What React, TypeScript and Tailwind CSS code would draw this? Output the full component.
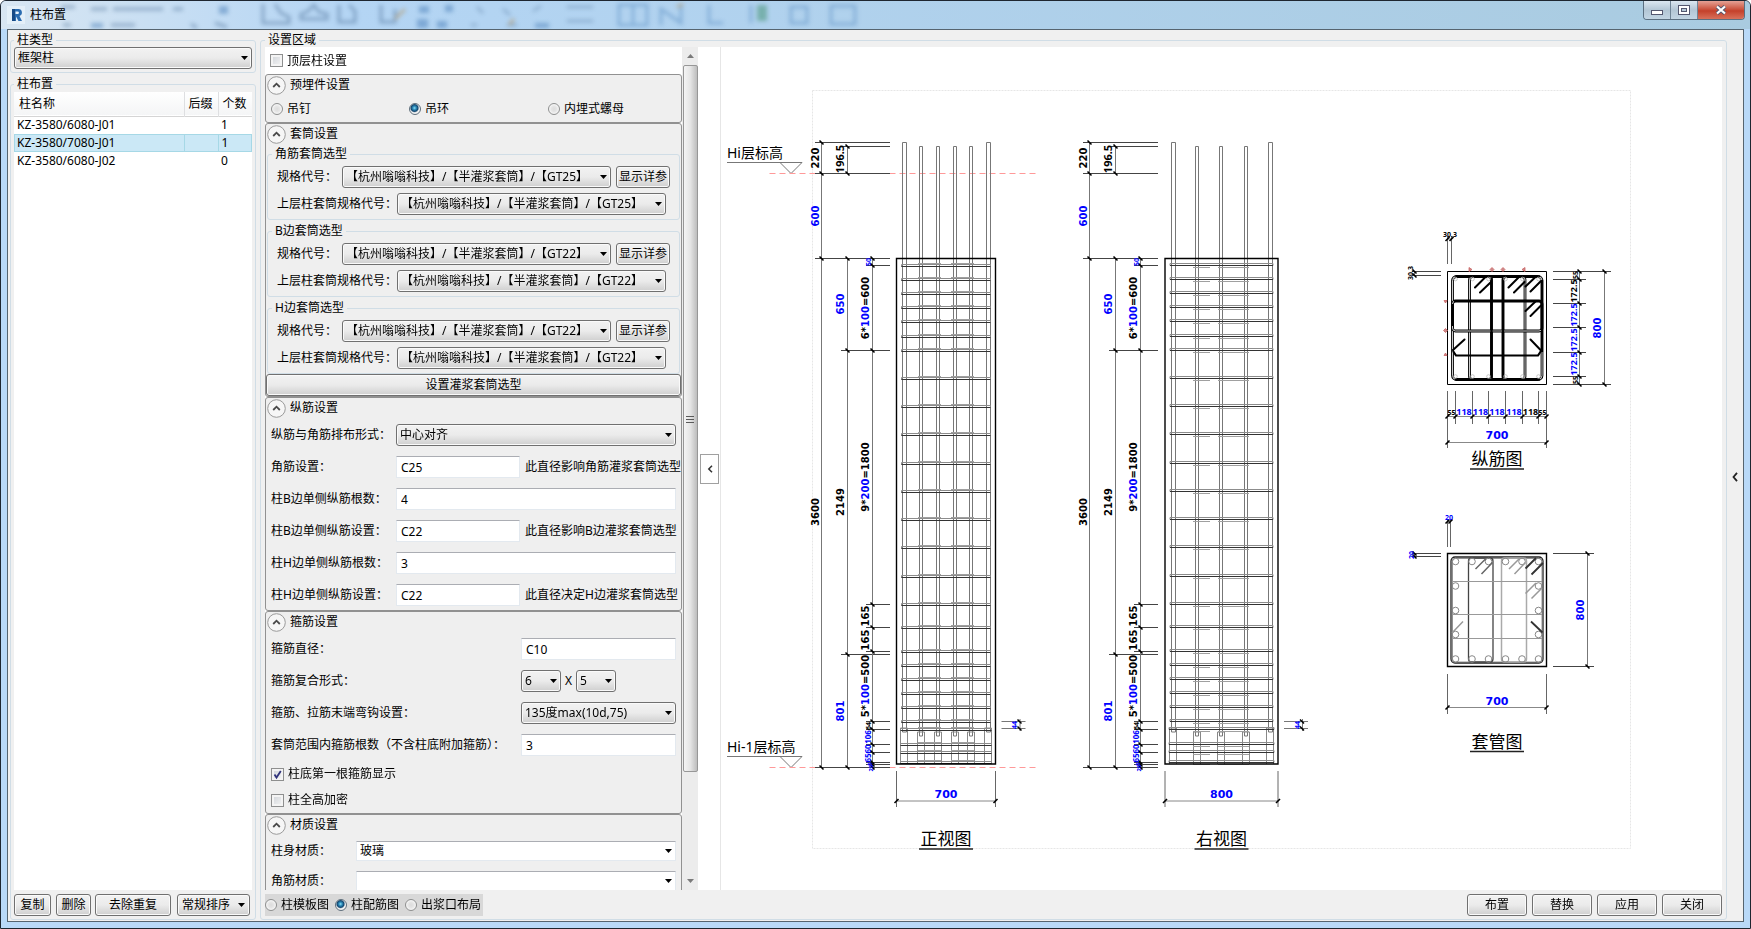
import { useState, type ReactNode } from "react";
import clsx from "clsx";

const FACE =
  "border border-[#707070] rounded-[3px] bg-linear-to-b from-[#f2f2f2] via-[#ebebeb] via-50% to-[#cfcfcf] shadow-[inset_0_0_0_1px_#fafafa]";

const COLUMNS = [
  { name: "KZ-3580/6080-J01", suffix: "", count: 1 },
  { name: "KZ-3580/7080-J01", suffix: "", count: 1 },
  { name: "KZ-3580/6080-J02", suffix: "", count: 0 },
];

function Arrow({ className }: { className?: string }) {
  return (
    <svg viewBox="0 0 7 4" className={clsx("pointer-events-none h-1 w-[7px]", className)}>
      <path d="M0 0h7L3.5 4z" fill="currentColor" />
    </svg>
  );
}

function Select({
  value,
  className,
  id,
  label,
  plain,
}: {
  value: string;
  className?: string;
  id?: string;
  label?: string;
  plain?: boolean;
}) {
  return (
    <div className={clsx("relative shrink-0", plain ? "h-5" : "h-[22px]", className)}>
      <select
        id={id}
        aria-label={label}
        defaultValue={value}
        className={clsx(
          "h-full w-full appearance-none pr-4 pl-[3px] outline-none",
          plain ? "border border-[#e3e9ef] border-t-[#abadb3] bg-white" : FACE,
        )}
      >
        <option>{value}</option>
      </select>
      <Arrow className="absolute top-1/2 right-1 -mt-0.5" />
    </div>
  );
}

function Button({ children, className }: { children: ReactNode; className?: string }) {
  return (
    <button
      type="button"
      className={clsx("flex h-[22px] shrink-0 items-center justify-center whitespace-nowrap", FACE, className)}
    >
      {children}
    </button>
  );
}

function TextBox({ id, value, className }: { id: string; value: string; className?: string }) {
  return (
    <input
      id={id}
      type="text"
      defaultValue={value}
      className={clsx(
        "h-[22px] shrink-0 border border-[#e3e9ef] border-t-[#abadb3] bg-white px-1 outline-none",
        className,
      )}
    />
  );
}

function Radio({ name, label, checked }: { name: string; label: string; checked?: boolean }) {
  return (
    <label className="flex items-center gap-1 whitespace-nowrap">
      <input
        type="radio"
        name={name}
        defaultChecked={checked}
        className="size-3 appearance-none rounded-full border border-[#8e8f8f] bg-[radial-gradient(circle,#dcdcdc_0,#e4e4e4_35%,#f6f6f6_70%)] checked:border-[#5f6f7c] checked:bg-[radial-gradient(circle_at_45%_40%,#8fe0f5_0,#2f8fbe_20%,#12466f_42%,#f2f2f2_58%)]"
      />
      {label}
    </label>
  );
}

function CheckBox({ label, checked }: { label: string; checked?: boolean }) {
  return (
    <label className="relative flex items-center gap-1 whitespace-nowrap">
      <input
        type="checkbox"
        defaultChecked={checked}
        className="peer size-[13px] appearance-none border border-[#8e8f8f] bg-linear-to-br from-[#cfd3d8] to-[#f6f6f6] shadow-[inset_0_0_0_2px_#f4f4f4]"
      />
      <svg viewBox="0 0 13 13" className="pointer-events-none absolute left-0 hidden size-[13px] peer-checked:block">
        <path d="M3.5 6.5 5.5 9.5 9.8 3" fill="none" stroke="#31347c" strokeWidth="1.8" />
      </svg>
      {label}
    </label>
  );
}

function Group({
  title,
  children,
  className,
  legend,
}: {
  title: string;
  children: ReactNode;
  className?: string;
  legend?: string;
}) {
  return (
    <fieldset className={clsx("min-w-0 rounded-[3px] border border-[#d0dde6]", className)}>
      <legend className={clsx("px-[3px] leading-[14px]", legend)}>{title}</legend>
      {children}
    </fieldset>
  );
}

function Section({ title, children }: { title: string; children: ReactNode }) {
  const [open, setOpen] = useState(true);

  return (
    <section className="rounded-[3px] border border-[#919191] bg-[#efefef]">
      <button type="button" onClick={() => setOpen(!open)} className="flex h-5 items-center gap-1 pl-px">
        <svg viewBox="0 0 19 19" className="size-[19px]" fill="none">
          <circle cx="9.5" cy="9.5" r="8.8" fill="#f6f6f6" stroke="#9a9a9a" />
          <path d="m6.2 11 3.3-3.3 3.3 3.3" stroke="#4a4a4a" strokeWidth="1.8" />
        </svg>
        {title}
      </button>
      {open && children}
    </section>
  );
}

function SleeveGroup({ title, id, model }: { title: string; id: string; model: string }) {
  const value = `【杭州嗡嗡科技】/【半灌浆套筒】/【${model}】`;

  return (
    <Group title={title} className="mx-px" legend="ml-1">
      <div className="flex flex-col gap-[5px] pt-[5px] pb-1 pl-[9px]">
        <div className="flex items-center">
          <label htmlFor={`${id}-spec`} className="w-[65px]">规格代号：</label>
          <Select id={`${id}-spec`} value={value} className="w-[269px]" />
          <Button className="ml-[5px] w-[54px]">显示详参</Button>
        </div>
        <div className="flex items-center">
          <label htmlFor={`${id}-upper`} className="w-[120px] whitespace-nowrap">上层柱套筒规格代号：</label>
          <Select id={`${id}-upper`} value={value} className="w-[269px]" />
        </div>
      </div>
    </Group>
  );
}

const BAR_FIELDS = [
  { id: "corner", label: "角筋设置：", value: "C25", hint: "此直径影响角筋灌浆套筒选型" },
  { id: "b-count", label: "柱B边单侧纵筋根数：", value: "4" },
  { id: "b-bar", label: "柱B边单侧纵筋设置：", value: "C22", hint: "此直径影响B边灌浆套筒选型" },
  { id: "h-count", label: "柱H边单侧纵筋根数：", value: "3" },
  { id: "h-bar", label: "柱H边单侧纵筋设置：", value: "C22", hint: "此直径决定H边灌浆套筒选型" },
];

function Settings() {
  return (
    <div className="w-[417px] overflow-y-auto bg-white [scrollbar-width:none]">
      <div className="flex h-[27px] items-center pl-[5px]">
        <CheckBox label="顶层柱设置" />
      </div>

      <Section title="预埋件设置">
        <div className="grid h-[27px] grid-cols-[138px_139px_auto] items-center pl-[5px]">
          <Radio name="embed" label="吊钉" />
          <Radio name="embed" label="吊环" checked />
          <Radio name="embed" label="内埋式螺母" />
        </div>
      </Section>

      <Section title="套筒设置">
        <div className="flex flex-col gap-1 pt-[3px]">
          <SleeveGroup title="角筋套筒选型" id="corner-sleeve" model="GT25" />
          <SleeveGroup title="B边套筒选型" id="b-sleeve" model="GT22" />
          <SleeveGroup title="H边套筒选型" id="h-sleeve" model="GT22" />
        </div>
        <Button className="w-full">设置灌浆套筒选型</Button>
      </Section>

      <Section title="纵筋设置">
        <div className="flex flex-col gap-2.5 pt-1.5 pb-1 pl-[5px]">
          <div className="flex items-center">
            <label htmlFor="align" className="w-[125px] whitespace-nowrap">纵筋与角筋排布形式：</label>
            <Select id="align" value="中心对齐" className="w-[280px]" />
          </div>
          {BAR_FIELDS.map((f) => (
            <div key={f.id} className="flex items-center">
              <label htmlFor={f.id} className="w-[125px] shrink-0 whitespace-nowrap">{f.label}</label>
              <TextBox id={f.id} value={f.value} className={f.hint ? "w-[124px]" : "w-[280px]"} />
              {f.hint && <span className="ml-[5px] whitespace-nowrap">{f.hint}</span>}
            </div>
          ))}
        </div>
      </Section>

      <Section title="箍筋设置">
        <div className="flex flex-col gap-2.5 pt-1.5 pl-[5px]">
          <div className="flex items-center">
            <label htmlFor="hoop" className="w-[250px]">箍筋直径：</label>
            <TextBox id="hoop" value="C10" className="w-[155px]" />
          </div>
          <div className="flex items-center">
            <label htmlFor="hoop-b" className="w-[250px]">箍筋复合形式：</label>
            <Select id="hoop-b" value="6" className="w-10" />
            <span className="w-[15px] text-center">X</span>
            <Select label="H边肢数" value="5" className="w-10" />
          </div>
          <div className="flex items-center">
            <label htmlFor="hook" className="w-[250px]">箍筋、拉筋末端弯钩设置：</label>
            <Select id="hook" value="135度max(10d,75)" className="w-[155px]" />
          </div>
          <div className="flex items-center">
            <label htmlFor="sleeve-hoops" className="w-[250px] whitespace-nowrap">
              套筒范围内箍筋根数（不含柱底附加箍筋）：
            </label>
            <TextBox id="sleeve-hoops" value="3" className="w-[155px]" />
          </div>
        </div>
        <div className="mt-[5px] grid auto-rows-[26px] items-center pl-[5px]">
          <CheckBox label="柱底第一根箍筋显示" checked />
          <CheckBox label="柱全高加密" />
        </div>
      </Section>

      <Section title="材质设置">
        <div className="flex flex-col gap-2.5 pt-1.5 pb-2 pl-[5px]">
          <div className="flex items-center">
            <label htmlFor="body-mat" className="w-[85px]">柱身材质：</label>
            <Select plain id="body-mat" value="玻璃" className="w-80" />
          </div>
          <div className="flex items-center">
            <label htmlFor="corner-mat" className="w-[85px]">角筋材质：</label>
            <Select plain id="corner-mat" value="" className="w-80" />
          </div>
        </div>
      </Section>
    </div>
  );
}

function ScrollBar() {
  return (
    <div className="flex w-4 flex-col items-center bg-[#ececec]">
      <div className="flex h-[18px] items-center">
        <Arrow className="rotate-180 text-[#7a7a7a]" />
      </div>
      <div className="flex w-[15px] flex-[707] items-center justify-center rounded-[2px] border border-[#979797] bg-linear-to-r from-[#f4f4f4] via-[#e4e4e4] to-[#bdbdbd]">
        <svg viewBox="0 0 8 8" className="size-2" stroke="#5a5a5a">
          <path d="M0 1.5h8M0 4.5h8M0 7.5h8" />
        </svg>
      </div>
      <div className="flex-[100]" />
      <div className="flex h-[18px] items-center">
        <Arrow className="text-[#7a7a7a]" />
      </div>
    </div>
  );
}

/* ---------- drawing ---------- */

const BLUE = "#0000ff";

function Num({ x, y, t, size = 10, blue, turn }: { x: number; y: number; t: string; size?: number; blue?: boolean; turn?: boolean }) {
  // in "6*100=600" only the spacing is editable, so it alone is blue
  const m = /^(\d+\*)(\d+)(=\d+)$/.exec(t);
  // tight dimensions take the narrower face
  const narrow = size < 10 || t.includes(".");
  return (
    <text
      transform={`translate(${x} ${y})${turn ? " rotate(-90)" : ""}`}
      textAnchor="middle"
      dy={size * 0.365}
      fontSize={size}
      fontWeight="bold"
      fill={blue ? BLUE : "#000"}
      className={narrow ? "font-['Noto_Sans',sans-serif]" : "font-['DejaVu_Sans',sans-serif]"}
    >
      {m ? (
        <>
          {m[1]}
          <tspan fill={BLUE}>{m[2]}</tspan>
          {m[3]}
        </>
      ) : (
        t
      )}
    </text>
  );
}

function VDim({ x, ys, from, to }: { x: number; ys: number[]; from: number; to: number }) {
  return (
    <g>
      <path d={`M${x} ${ys[0]}V${ys[ys.length - 1]}`} stroke="#777" />
      {ys.map((y) => (
        <g key={y}>
          <path d={`M${from} ${y}H${to}`} stroke="#444" />
          <path d={`M${x - 2} ${y - 2}l4 4`} stroke="#000" strokeWidth="1.6" />
        </g>
      ))}
    </g>
  );
}

function HDim({ y, xs, from, to }: { y: number; xs: number[]; from: number; to: number }) {
  return (
    <g>
      <path d={`M${xs[0]} ${y}H${xs[xs.length - 1]}`} stroke="#888" />
      {xs.map((x) => (
        <g key={x}>
          <path d={`M${x} ${from}V${to}`} stroke="#666" />
          <path d={`M${x - 2} ${y + 2}l4 -4`} stroke="#000" strokeWidth="1.6" />
        </g>
      ))}
    </g>
  );
}

function Caption({ x, y, t }: { x: number; y: number; t: string }) {
  return (
    <g>
      <text x={x} y={y} textAnchor="middle" fontSize="17">{t}</text>
      <path d={`M${x - 27} ${y + 4}h54`} stroke="#222" strokeWidth="1.5" />
    </g>
  );
}

function Level({ y, t }: { y: number; t: string }) {
  return (
    <g fill="none">
      <text x="727" y={y - 16} fontSize="14" fill="#000">{t}</text>
      <path d={`M727 ${y - 11}h75l-11 11l-11 -11`} stroke="#777" />
      <path d={`M769.5 ${y}H1039`} stroke="#f99" strokeDasharray="6 4" />
    </g>
  );
}

function SideDims() {
  return (
    <g>
      <VDim x={821.5} ys={[142.5, 173.5, 258.5, 767.5]} from={815} to={890} />
      <VDim x={847.5} ys={[146.5, 173.5]} from={841} to={890} />
      <VDim x={847.5} ys={[258.5, 350.5, 654.5, 767.5]} from={841} to={890} />
      <VDim x={872.5} ys={[258.5, 265.5, 350.5, 604.5, 627.5, 651.5, 721.5, 729.5, 744.5, 752.5, 762.5, 764.5, 767.5]} from={866} to={890} />
      <Num turn x={815} y={158} t="220" />
      <Num turn x={840} y={159} t="196.5" size={11} />
      <Num turn blue x={815} y={216} t="600" />
      <Num turn blue x={840} y={304} t="650" />
      <Num turn blue x={868} y={262} t="50" size={7} />
      <Num turn x={865} y={308} t="6*100=600" />
      <Num turn x={865} y={477} t="9*200=1800" />
      <Num turn x={815} y={512} t="3600" />
      <Num turn x={840} y={502} t="2149" />
      <Num turn x={865} y={616} t="165" />
      <Num turn x={865} y={640} t="165" />
      <Num turn x={865} y={686} t="5*100=500" />
      <Num turn blue x={840} y={711} t="801" />
      <Num turn x={868} y={726} t="64" size={7} />
      <Num turn blue x={868} y={737} t="106" size={8} />
      <Num turn blue x={868} y={749} t="60" size={8} />
      <Num turn blue x={868} y={758} t="65" size={8} />
      <Num turn blue x={870} y={764} t="5" size={6} />
      <Num turn blue x={871} y={768} t="20" size={6} />
    </g>
  );
}

// heights of the hoops from the top of the column to the sleeves
const HOOPS = [
  266, 280, 294, 308, 322, 337, 351, 379, 407, 435, 464, 492, 520, 548, 577, 605, 628, 652, 666, 680, 694, 708, 722,
];
const SLEEVE_HOOPS = [730, 745, 753, 763];

function Elevation({
  left,
  right,
  bars,
  links,
  linkShift,
  t,
  width,
}: {
  left: number;
  right: number;
  bars: number[];
  links: [number, number][];
  linkShift: number;
  t: string;
  width: string;
}) {
  const mid = (left + right) / 2;
  const hoopShift = linkShift > 0 ? -1 : 0;
  return (
    <g fill="none">
      {bars.map((x, i) => {
        const corner = i === 0 || i === bars.length - 1;
        const top = corner ? 142.5 : 146.5;
        const end = corner ? 732 : 736;
        return (
          <g key={x}>
            <path d={`M${x} ${end}V${top}h${corner ? 4 : 3}V${end}z`} stroke="#777" />
            <path d={`M${x - 2} 764V${end - 4}h7V764`} stroke="#888" />
          </g>
        );
      })}
      {[...HOOPS, ...SLEEVE_HOOPS].map((y) => {
        const out = y > 725 ? 4 : 5;
        const yy = y + hoopShift;
        return (
          <g key={y}>
            <path d={`M${left + out} ${yy - 1.5}H${right - out}v2H${left + out}z`} stroke="#8c8c8c" />
            <path d={`M${left + out} ${yy + 0.5}H${right - out}`} stroke="#333" />
            {links.map(([a, b]) => (
              <path key={a} d={`M${a} ${yy + linkShift}H${b}`} stroke="#a0a0a0" />
            ))}
          </g>
        );
      })}
      <path d={`M${left} 258.5H${right}V764H${left}z`} stroke="#000" strokeWidth="1.4" />
      <HDim y={801} xs={[left, right]} from={771} to={807} />
      <Num blue x={mid} y={794} t={width} size={11} />
      <path d={`M${right + 6} 721.5h24M${right + 6} 728.5h24M${right + 24.5} 719v12`} stroke="#777" />
      <path d={`M${right + 22} 719.5l4 4M${right + 22} 726.5l4 4`} stroke="#000" strokeWidth="1.5" />
      <Num turn blue x={right + 19} y={725} t="44" size={7} />
      <g fill="#000">
        <Caption x={mid} y={845} t={t} />
      </g>
    </g>
  );
}

// twin outlines of the closed hoops seen from above
const CLOSED_HOOPS = [
  { x: 1452.5, y: 276.5, w: 89.5, h: 103, r: 4 },
  { x: 1469.5, y: 276.5, w: 22, h: 103, r: 3 },
  { x: 1503, y: 276.5, w: 22, h: 103, r: 3 },
  { x: 1452.5, y: 301, w: 89.5, h: 30, r: 3 },
];

function BarSection() {
  const xs = [1447.5, 1455.5, 1472.5, 1488.5, 1505.5, 1522.5, 1538.5, 1546.5];
  const ys = [271.5, 279.5, 303.5, 327.5, 352.5, 376.5, 384.5];
  return (
    <g fill="none" stroke="#000">
      <path d="M1447.5 271.5h99v113h-99z" />
      {CLOSED_HOOPS.map((h) => (
        <g key={`${h.x}-${h.y}`}>
          <rect x={h.x} y={h.y} width={h.w} height={h.h} rx={h.r} strokeWidth="2.8" />
          <rect x={h.x} y={h.y} width={h.w} height={h.h} rx={h.r} stroke="#fff" strokeWidth="0.8" />
        </g>
      ))}
      <path
        d="M1455 276.5h85M1455 379.5h85M1454 301h87M1491.5 278v100M1503 278v100M1453 351l3 4.500h82l3-4.500M1452.500 304v22M1542 280v72"
        strokeWidth="2.2"
      />
      <path
        d="m1475 287.5 10.5-10.5m-5.5 15.5 10.5-10m18 5 10.5-10.5m-5 15.5 10.5-10.5m1 4.5 10-9.5m-5 14.5 10.5-10.5m-15.5 30 10.5-10m-5.5 15 10.5-10.5M1453 350l11.5-10.5m66 0 11 11.5"
        strokeWidth="2"
        strokeLinecap="round"
      />
      <g stroke="#bbb" strokeWidth="0.8">
        {[1455.5, 1472.5, 1488.5, 1505.5, 1522.5, 1538.5].map((x) => (
          <g key={x}>
            <circle cx={x} cy="279" r="1.8" />
            <circle cx={x} cy="376.5" r="1.8" />
          </g>
        ))}
      </g>
      <path
        d="m1469 267.5 3 2-3 2zM1490 269.5l2-2 2 2-2 2zM1501 269.5l2-2 2 2-2 2zM1525 267.5l-3 2 3 2zM1444 300.5h3l-1.5 2.5zM1443.5 330.5l2-2 2 2-2 2zM1444 355.5h3l-1.5-2.5z"
        fill="#c88"
        stroke="#c66"
        strokeWidth="0.8"
      />
      <HDim y={239} xs={[1447.5, 1451.5]} from={236} to={264} />
      <VDim x={1414.5} ys={[271.5, 275.5]} from={1412} to={1441} />
      <VDim x={1579.5} ys={ys} from={1553} to={1586} />
      <VDim x={1604.5} ys={[271.5, 384.5]} from={1586} to={1611} />
      <HDim y={416.5} xs={xs} from={391} to={424} />
      <HDim y={442.5} xs={[1447.5, 1546.5]} from={424} to={448} />
      <g stroke="none" fill="#000">
        <Num x={1450} y={234} t="30.3" size={7} />
        <Num turn x={1410} y={273} t="30.3" size={7} />
        <Num turn x={1575} y={275} t="55" size={7} />
        {[291, 315, 340, 364].map((y, i) => (
          <Num key={y} turn blue={i > 0} x={1574} y={y} t="172.5" size={9} />
        ))}
        <Num turn x={1575} y={380} t="55" size={7} />
        <Num x={1451.5} y={412} t="55" size={7} />
        {[1464, 1480.5, 1497, 1514, 1530.5].map((x, i) => (
          <Num key={x} blue={i < 4} x={x} y={412} t="118" size={9} />
        ))}
        <Num x={1542.5} y={412} t="55" size={7} />
        <Num turn blue x={1597.5} y={328} t="800" />
        <Num blue x={1497} y={435} t="700" size={11} />
        <Caption x={1497} y={465} t="纵筋图" />
      </g>
    </g>
  );
}

function SleeveSection() {
  const tubes: [number, number][] = [
    ...[1455.5, 1472, 1488.5, 1505.5, 1522, 1538.5].flatMap((x): [number, number][] => [
      [x, 561.5],
      [x, 659],
    ]),
    ...[586, 610.5, 634.5].flatMap((y): [number, number][] => [
      [1455.5, y],
      [1538.5, y],
    ]),
  ];
  return (
    <g fill="none" stroke="#000">
      <path d="M1447.5 553.5h99v113h-99z" strokeWidth="1.4" />
      <rect x="1451" y="557" width="92" height="106" rx="4" strokeWidth="1.3" stroke="#222" />
      <rect x="1452.5" y="558.5" width="89.5" height="103.5" rx="3" stroke="#777" strokeWidth="0.8" />
      <rect x="1468.5" y="558" width="24.5" height="104" rx="3" stroke="#444" strokeWidth="1.3" />
      <rect x="1501.5" y="558" width="25" height="104" rx="3" stroke="#aaa" strokeWidth="1.5" />
      <path d="M1452 581.5h90M1452 614.5h90M1452 638.5h90" stroke="#999" />
      <g stroke="#888">
        {tubes.map(([x, y]) => (
          <circle key={`${x}-${y}`} cx={x} cy={y} r="3.3" />
        ))}
      </g>
      <path d="m1475.5 569 10.5-10.5m-4.5 15.5 11-11.5" stroke="#666" strokeWidth="1.5" />
      <path d="m1509 569 10.5-10.5m-5 15.5 11-11.5m0 31 10.5-10.5m-4.5 15.5 10.5-10.5M1452 633l11-11.5" stroke="#999" strokeWidth="1.5" />
      <path d="m1525.5 568.5 10.5-10.5m-4.5 16.5 11.5-11.5M1531 621.5l11.5 11" stroke="#333" strokeWidth="1.8" />
      <HDim y={521.5} xs={[1447.5, 1450.5]} from={520} to={547} />
      <VDim x={1414.5} ys={[553.5, 556.5]} from={1412} to={1441} />
      <VDim x={1587.5} ys={[553.5, 666.5]} from={1553} to={1594} />
      <HDim y={707.5} xs={[1447.5, 1546.5]} from={674} to={714} />
      <g stroke="none" fill="#000">
        <Num blue x={1449} y={517} t="20" size={7} />
        <Num turn blue x={1411} y={555} t="20" size={7} />
        <Num turn blue x={1580.5} y={610} t="800" />
        <Num blue x={1497} y={701} t="700" size={11} />
        <Caption x={1497} y={747.5} t="套管图" />
      </g>
    </g>
  );
}

function Drawing() {
  return (
    <svg viewBox="721 47 1001 843" preserveAspectRatio="xMinYMin meet" className="h-full w-full">
      <path d="M812.5 90.5H1630.5V848.5H812.5z" fill="none" stroke="#e6e6e6" strokeDasharray="2 1" />
      <Level y={173.5} t="Hi层标高" />
      <Level y={767.5} t="Hi-1层标高" />
      <SideDims />
      <g transform="translate(268 0)">
        <SideDims />
      </g>
      <Elevation
        left={896.5}
        right={995.5}
        bars={[902.5, 919.5, 936.5, 953.5, 969.5, 986.5]}
        links={[[918, 941], [951, 974]]}
        linkShift={-2.5}
        t="正视图"
        width="700"
      />
      <Elevation
        left={1165}
        right={1278}
        bars={[1171.5, 1195.5, 1219.5, 1244.5, 1268.5]}
        links={[[1193, 1210], [1218, 1249]]}
        linkShift={2.5}
        t="右视图"
        width="800"
      />
      <BarSection />
      <SleeveSection />
    </svg>
  );
}

/* ---------- window ---------- */

function TitleBar() {
  return (
    <header className="relative flex h-7 shrink-0 items-center overflow-hidden bg-linear-to-r from-[#d8e6f2] via-[#b4d5f4] via-20% to-[#a9cbe0]">
      {/* ribbon of the host program showing through the glass */}
      <svg viewBox="0 0 900 28" className="absolute inset-y-0 left-0 h-7 w-[900px] opacity-50 blur-[2px]" fill="none" stroke="#4f7299" strokeWidth="3">
        <path d="M60 6h14M90 8h16M112 8h50M172 8h10M62 24h8M110 24h24M190 23l6 4M214 22l12 4" />
        <path d="M262 3v19h26v-6l-8-4-6-9M300 18h26v-5l-8-2-5-7-7 7-6 2zM338 4v17h16V10l-6-6M380 4v17h14V8" />
        <path d="M476 6l6 6M502 8l7 6M532 10l8-5M470 24h6M506 24h10M566 6h26M566 20h26" strokeWidth="2" />
        <path d="M618 4h28v20h-28zM632 4v20M660 24V8l20 14V4M708 4v18h14M750 4v18M790 6h16v16h-16zM830 5h24v18h-24z" stroke="#5b8fc4" />
        <path d="M218 5h9v8h-9zM416 18h11v9h-11zM436 20h10v7h-10zM534 22h14v5h-14zM418 5h10v7h-10zM444 4h8v7h-8zM90 22h12v5H90z" fill="#4a7fb8" stroke="none" />
        <path d="M394 18l10-10M508 24l5-6M676 6l6-3" stroke="#b58a4c" />
        <path d="M756 4h10v16h-10z" fill="#3f8f6d" stroke="none" />
      </svg>
      <div className="relative ml-1.5 flex items-center gap-[5px]">
        <svg viewBox="0 0 18 18" className="size-[18px]">
          <rect width="18" height="18" fill="#eaf3fb" opacity=".7" />
          <path d="M5 3h6.5a3.6 3.6 0 0 1 1 7L15 15h-3.500L9 10.500V15H5z" fill="#2b6cb0" />
          <path d="M5 3h3v12H5z" fill="#174a86" />
          <path d="M8.500 5.500h2.200a1.200 1.200 0 0 1 0 2.500H8.500z" fill="#eaf3fb" />
        </svg>
        <h1>柱布置</h1>
      </div>
      <div className="relative mr-[5px] ml-auto flex h-[19px] self-start overflow-hidden rounded-b-[4px] border border-t-0 border-[#5b6f80]">
        <button type="button" aria-label="最小化" className="flex w-[27px] items-center justify-center border-r border-[#6f8496] bg-linear-to-b from-[#dbe7f1] via-[#b3c6d5] via-50% to-[#c2d5e3]">
          <svg viewBox="0 0 12 5" className="mt-1 h-[5px] w-3">
            <rect x=".5" y=".5" width="11" height="4" fill="#fff" stroke="#545870" />
          </svg>
        </button>
        <button type="button" aria-label="最大化" className="flex w-[27px] items-center justify-center border-r border-[#6f8496] bg-linear-to-b from-[#dbe7f1] via-[#b3c6d5] via-50% to-[#c2d5e3]">
          <svg viewBox="0 0 12 10" className="h-2.5 w-3">
            <rect x=".5" y=".5" width="11" height="9" fill="#fff" stroke="#545870" />
            <rect x="3.5" y="3.5" width="5" height="3" fill="#b8cbd9" stroke="#545870" />
          </svg>
        </button>
        <button type="button" aria-label="关闭窗口" className="flex w-[46px] items-center justify-center bg-linear-to-b from-[#e4a195] via-[#c4402a] via-55% to-[#d8705a]">
          <svg viewBox="0 0 12 10" className="h-2.5 w-3">
            <path d="m2 1.5 8 7m0-7-8 7" stroke="#545870" strokeWidth="4" />
            <path d="m2 1.5 8 7m0-7-8 7" stroke="#fff" strokeWidth="2.2" />
          </svg>
        </button>
      </div>
    </header>
  );
}

function ColumnTable() {
  return (
    <div className="min-h-0 flex-1 bg-white">
      <table className="w-full table-fixed border-collapse text-left">
        <thead>
          <tr className="h-6 border-b border-[#d5d5d5] bg-linear-to-b from-white to-[#f4f5f6]">
            <th className="pl-[5px] font-normal">柱名称</th>
            <th className="w-[34px] border-x border-[#dedfe1] pl-1 font-normal">后缀</th>
            <th className="w-[34px] pl-1 font-normal">个数</th>
          </tr>
        </thead>
        <tbody>
          {COLUMNS.map((c, i) => (
            <tr key={c.name} className={clsx("h-[18px]", i === 1 && "bg-[#cbe8f6] outline -outline-offset-1 outline-[#a6d8e6]")}>
              <td className="py-0 pl-[3px] leading-4">{c.name}</td>
              <td className={clsx("p-0", i === 1 && "border-x border-[#a6d8e6]")}>{c.suffix}</td>
              <td className="py-0 pl-[3px] leading-4">{c.count}</td>
            </tr>
          ))}
        </tbody>
      </table>
    </div>
  );
}

export default function App() {
  return (
    <div className="flex h-screen min-h-[600px] flex-col overflow-hidden rounded-t-md border border-[#1e2630] bg-[#b9d9f8] font-['Noto_Sans','Noto_Sans_CJK_SC',sans-serif] text-[12px] leading-4 text-black">
      <TitleBar />
      <main className="mx-1.5 mb-1.5 flex min-h-0 flex-1 border border-[#56646f] bg-[#f0f0f0] pt-[3px] pb-px pl-0.5">
        <div className="mr-1 flex w-[246px] shrink-0 flex-col gap-1">
          <Group title="柱类型" className="px-[3px] pb-[3px]">
            <Select label="柱类型" value="框架柱" />
          </Group>
          <Group title="柱布置" className="flex min-h-0 flex-1 flex-col px-[3px] pt-px pb-[3px]">
            <ColumnTable />
            <div className="mt-1 flex">
              <Button className="w-[37px]">复制</Button>
              <Button className="ml-[5px] w-[35px]">删除</Button>
              <Button className="ml-1 w-[76px]">去除重复</Button>
              <Button className="ml-1.5 w-[73px] gap-2">
                常规排序
                <Arrow />
              </Button>
            </div>
          </Group>
        </div>

        <Group title="设置区域" className="flex min-h-0 flex-1 flex-col px-1 pb-[3px]">
          <div className="flex min-h-0 flex-1 bg-white">
            <Settings />
            <ScrollBar />
            <div className="flex w-[23px] items-center border-r border-[#e6e6e6] pl-0.5">
              <button type="button" aria-label="收起设置" className="flex h-[30px] w-[19px] items-center justify-center border border-[#a0a0a0] bg-white">
                <svg viewBox="0 0 6 8" className="h-2 w-1.5" fill="none" stroke="#333" strokeWidth="1.5">
                  <path d="M5 .8 1.8 4 5 7.2" />
                </svg>
              </button>
            </div>
            <div className="min-w-0 flex-1">
              <Drawing />
            </div>
          </div>
          <div className="mt-1 flex gap-[5px]">
            <div className="mr-auto flex items-center gap-1.5 bg-[#d8d8d8] pr-0.5">
              <Radio name="view" label="柱模板图" />
              <Radio name="view" label="柱配筋图" checked />
              <Radio name="view" label="出浆口布局" />
            </div>
            <Button className="w-[60px]">布置</Button>
            <Button className="w-[60px]">替换</Button>
            <Button className="w-[60px]">应用</Button>
            <Button className="w-[60px]">关闭</Button>
          </div>
        </Group>

        <button type="button" aria-label="展开侧栏" className="flex w-4 shrink-0 items-center justify-center">
          <svg viewBox="0 0 6 10" className="h-2.5 w-1.5" fill="none" stroke="#222" strokeWidth="1.8">
            <path d="M5 .8 1.5 5 5 9.2" />
          </svg>
        </button>
      </main>
    </div>
  );
}
